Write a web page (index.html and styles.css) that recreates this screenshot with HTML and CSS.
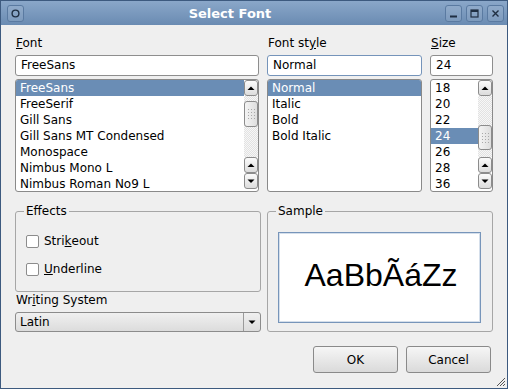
FILE: index.html
```html
<!DOCTYPE html>
<html lang="en">
<head>
    <meta charset="UTF-8">
    <title>Select Font</title>
    <link rel="stylesheet" href="styles.css">
</head>
<body>
    <div class="window">
        <div class="titlebar">
            <span class="tb-btn">
                <svg width="15" height="15" viewBox="0 0 15 15"><circle cx="7.5" cy="7.5" r="3.4" fill="none" stroke="#1f2e42" stroke-width="1.4"/></svg>
            </span>
            <span class="title">Select Font</span>
            <div class="tb-right">
                <span class="tb-btn">
                    <svg width="15" height="15" viewBox="0 0 15 15"><rect x="4" y="9.5" width="7" height="2" fill="#1f2e42"/></svg>
                </span>
                <span class="tb-btn">
                    <svg width="15" height="15" viewBox="0 0 15 15"><rect x="4" y="4" width="7" height="7" fill="none" stroke="#1f2e42" stroke-width="1.2"/><rect x="4" y="4" width="7" height="2" fill="#1f2e42"/></svg>
                </span>
                <span class="tb-btn">
                    <svg width="15" height="15" viewBox="0 0 15 15"><path d="M4.5 4.5 L10.5 10.5 M10.5 4.5 L4.5 10.5" stroke="#1f2e42" stroke-width="1.4"/></svg>
                </span>
            </div>
        </div>

        <div class="content">
            <div class="pickers">
                <div class="picker">
                    <div class="label"><u>F</u>ont</div>
                    <div class="field">FreeSans</div>
                    <div class="list">
                        <ul class="items">
                            <li class="sel">FreeSans</li>
                            <li>FreeSerif</li>
                            <li>Gill Sans</li>
                            <li>Gill Sans MT Condensed</li>
                            <li>Monospace</li>
                            <li>Nimbus Mono L</li>
                            <li>Nimbus Roman No9 L</li>
                        </ul>
                        <div class="scrollbar">
                            <span class="sb-btn"><svg width="12" height="14" viewBox="0 0 12 14"><polygon points="2.5,9 6,5.5 9.5,9" fill="#000"/></svg></span>
                            <div class="track"><span class="thumb thumb-font"><i></i></span></div>
                            <span class="sb-btn"><svg width="12" height="14" viewBox="0 0 12 14"><polygon points="2.5,9 6,5.5 9.5,9" fill="#000"/></svg></span>
                            <span class="sb-btn"><svg width="12" height="14" viewBox="0 0 12 14"><polygon points="2.5,5.5 6,9 9.5,5.5" fill="#000"/></svg></span>
                        </div>
                    </div>
                </div>

                <div class="picker">
                    <div class="label">Font st<u>y</u>le</div>
                    <div class="field focus">Normal</div>
                    <div class="list">
                        <ul class="items">
                            <li class="sel">Normal</li>
                            <li>Italic</li>
                            <li>Bold</li>
                            <li>Bold Italic</li>
                        </ul>
                    </div>
                </div>

                <div class="picker">
                    <div class="label"><u>S</u>ize</div>
                    <div class="field">24</div>
                    <div class="list">
                        <ul class="items">
                            <li>18</li>
                            <li>20</li>
                            <li>22</li>
                            <li class="sel">24</li>
                            <li>26</li>
                            <li>28</li>
                            <li>36</li>
                        </ul>
                        <div class="scrollbar">
                            <span class="sb-btn"><svg width="12" height="14" viewBox="0 0 12 14"><polygon points="2.5,9 6,5.5 9.5,9" fill="#000"/></svg></span>
                            <div class="track"><span class="thumb thumb-size"><i></i></span></div>
                            <span class="sb-btn"><svg width="12" height="14" viewBox="0 0 12 14"><polygon points="2.5,9 6,5.5 9.5,9" fill="#000"/></svg></span>
                            <span class="sb-btn"><svg width="12" height="14" viewBox="0 0 12 14"><polygon points="2.5,5.5 6,9 9.5,5.5" fill="#000"/></svg></span>
                        </div>
                    </div>
                </div>
            </div>

            <div class="lower">
                <div class="left">
                    <fieldset class="group effects">
                        <legend>Effects</legend>
                        <div class="check"><span class="box"></span>Stri<u>k</u>eout</div>
                        <div class="check"><span class="box"></span><u>U</u>nderline</div>
                    </fieldset>
                    <div class="label">Wr<u>i</u>ting System</div>
                    <div class="combo">
                        <span class="combo-text">Latin</span>
                        <span class="combo-arrow"><svg width="10" height="8" viewBox="0 0 10 8"><polygon points="1.5,2.5 5,6 8.5,2.5" fill="#000"/></svg></span>
                    </div>
                </div>
                <fieldset class="group sample">
                    <legend>Sample</legend>
                    <div class="preview">AaBbÃáZz</div>
                </fieldset>
            </div>

            <div class="actions">
                <button class="btn">OK</button>
                <button class="btn">Cancel</button>
            </div>
        </div>

        <svg class="grip" width="12" height="12" viewBox="0 0 12 12">
            <path d="M11 3 L3 11 M11 6 L6 11 M11 9 L9 11" stroke="#555" stroke-width="1"/>
        </svg>
    </div>
</body>
</html>
```

FILE: styles.css
```css
* {
    box-sizing: border-box;
}

body {
    margin: 0;
    font-family: "DejaVu Sans", sans-serif;
    font-size: 12px;
    color: #000;
    background: #efefef;
}

.window {
    position: relative;
    width: 508px;
    height: 389px;
    border: 1px solid #3d5a7f;
    background: #efefef;
    display: flex;
    flex-direction: column;
}

/* title bar */
.titlebar {
    height: 24px;
    flex: none;
    display: flex;
    align-items: center;
    padding: 0 3px 0 6px;
    background: linear-gradient(#8aa7c9, #6a8bb2);
}

.title {
    flex: 1;
    text-align: center;
    padding-right: 9px;
    color: #fff;
    font-weight: bold;
    font-size: 13px;
}

.tb-right {
    display: flex;
    gap: 4px;
}

.tb-btn {
    width: 17px;
    height: 17px;
    border: 1px solid #5a7aa1;
    border-radius: 3px;
    background: rgba(255, 255, 255, 0.1);
    display: flex;
    align-items: center;
    justify-content: center;
}

/* body */
.content {
    flex: 1;
    padding: 10px 14px 0;
}

.label {
    height: 16px;
    line-height: 16px;
    padding-left: 1px;
}

.pickers {
    display: grid;
    grid-template-columns: 244px 155px 63px;
    column-gap: 8px;
}

.picker {
    display: flex;
    flex-direction: column;
}

.field {
    margin-top: 4px;
    height: 21px;
    line-height: 19px;
    padding-left: 5px;
    background: #fff;
    border: 1px solid #8e8e8e;
    border-radius: 3px;
}

.field.focus {
    border-color: #7594ba;
}

.list {
    margin-top: 3px;
    height: 113px;
    display: flex;
    background: #fff;
    border: 1px solid #8a8a8a;
    border-radius: 3px;
    overflow: hidden;
}

.items {
    flex: 1;
    list-style: none;
    margin: 0;
    padding: 0;
    overflow: hidden;
}

.items li {
    height: 16px;
    line-height: 16px;
    padding-left: 4px;
    white-space: nowrap;
}

.items li.sel {
    background: #6a8db5;
    color: #fff;
}

/* scroll bars */
.scrollbar {
    width: 14px;
    flex: none;
    display: flex;
    flex-direction: column;
    padding-bottom: 2px;
}

.sb-btn {
    height: 16px;
    flex: none;
    display: flex;
    align-items: center;
    justify-content: center;
    border: 1px solid #8c8c8c;
    border-radius: 3px;
    background: linear-gradient(#fbfbfb, #dcdcdc);
}

.track {
    flex: 1;
    background: repeating-conic-gradient(#e2e2e2 0 25%, #f7f7f7 0 50%) 0 0 / 2px 2px;
}

.thumb {
    display: flex;
    align-items: center;
    justify-content: center;
    border: 1px solid #8c8c8c;
    border-radius: 3px;
    background: linear-gradient(90deg, #f4f4f4, #dedede);
}

.thumb i {
    width: 9px;
    height: 12px;
    background-image: radial-gradient(circle, #a9a9a9 0.7px, transparent 0.9px);
    background-size: 3px 3px;
}

.thumb-font {
    margin-top: 5px;
    height: 26px;
}

.thumb-size {
    margin-top: 29px;
    height: 25px;
}

/* lower part */
.lower {
    margin-top: 11px;
    display: grid;
    grid-template-columns: 246px 226px;
    column-gap: 6px;
}

.group {
    margin: 0;
    padding: 0;
    min-width: 0;
    border: 1px solid #a6a6a6;
    border-radius: 3px;
}

.group legend {
    margin-left: 8px;
    padding: 0 2px;
    line-height: 16px;
}

.effects {
    padding-bottom: 14px;
}

.check {
    height: 16px;
    display: flex;
    align-items: center;
    margin: 12px 0 0 10px;
}

.check:first-of-type {
    margin-top: 14px;
}

.box {
    width: 13px;
    height: 13px;
    margin-right: 5px;
    background: #fff;
    border: 1px solid #8c8c8c;
    border-radius: 2px;
}

.combo {
    margin-top: 4px;
    height: 20px;
    display: flex;
    border: 1px solid #8c8c8c;
    border-radius: 3px;
    background: linear-gradient(#f0f0f0, #dcdcdc);
}

.combo-text {
    flex: 1;
    line-height: 18px;
    padding-left: 4px;
}

.combo-arrow {
    width: 17px;
    display: flex;
    align-items: center;
    justify-content: center;
    border-left: 1px solid #9a9a9a;
}

.sample {
    padding: 13px 11px 8px 0;
}

.preview {
    height: 91px;
    margin-left: 10px;
    padding: 0 0 4px 3px;
    display: flex;
    align-items: center;
    justify-content: center;
    background: #fff;
    border: 1px solid #7795ba;
    box-shadow: inset 0 0 0 1px #d5dfeb;
    font-family: "Liberation Sans", Arial, sans-serif;
    font-size: 32px;
}

/* buttons */
.actions {
    margin-top: 14px;
    padding-right: 2px;
    display: flex;
    justify-content: flex-end;
    gap: 8px;
}

.btn {
    width: 85px;
    height: 27px;
    font-family: "DejaVu Sans", sans-serif;
    font-size: 12px;
    color: #000;
    border: 1px solid #8a8a8a;
    border-radius: 3px;
    background: linear-gradient(#f6f6f6, #dadada);
}

.grip {
    position: absolute;
    right: 1px;
    bottom: 1px;
}
```
